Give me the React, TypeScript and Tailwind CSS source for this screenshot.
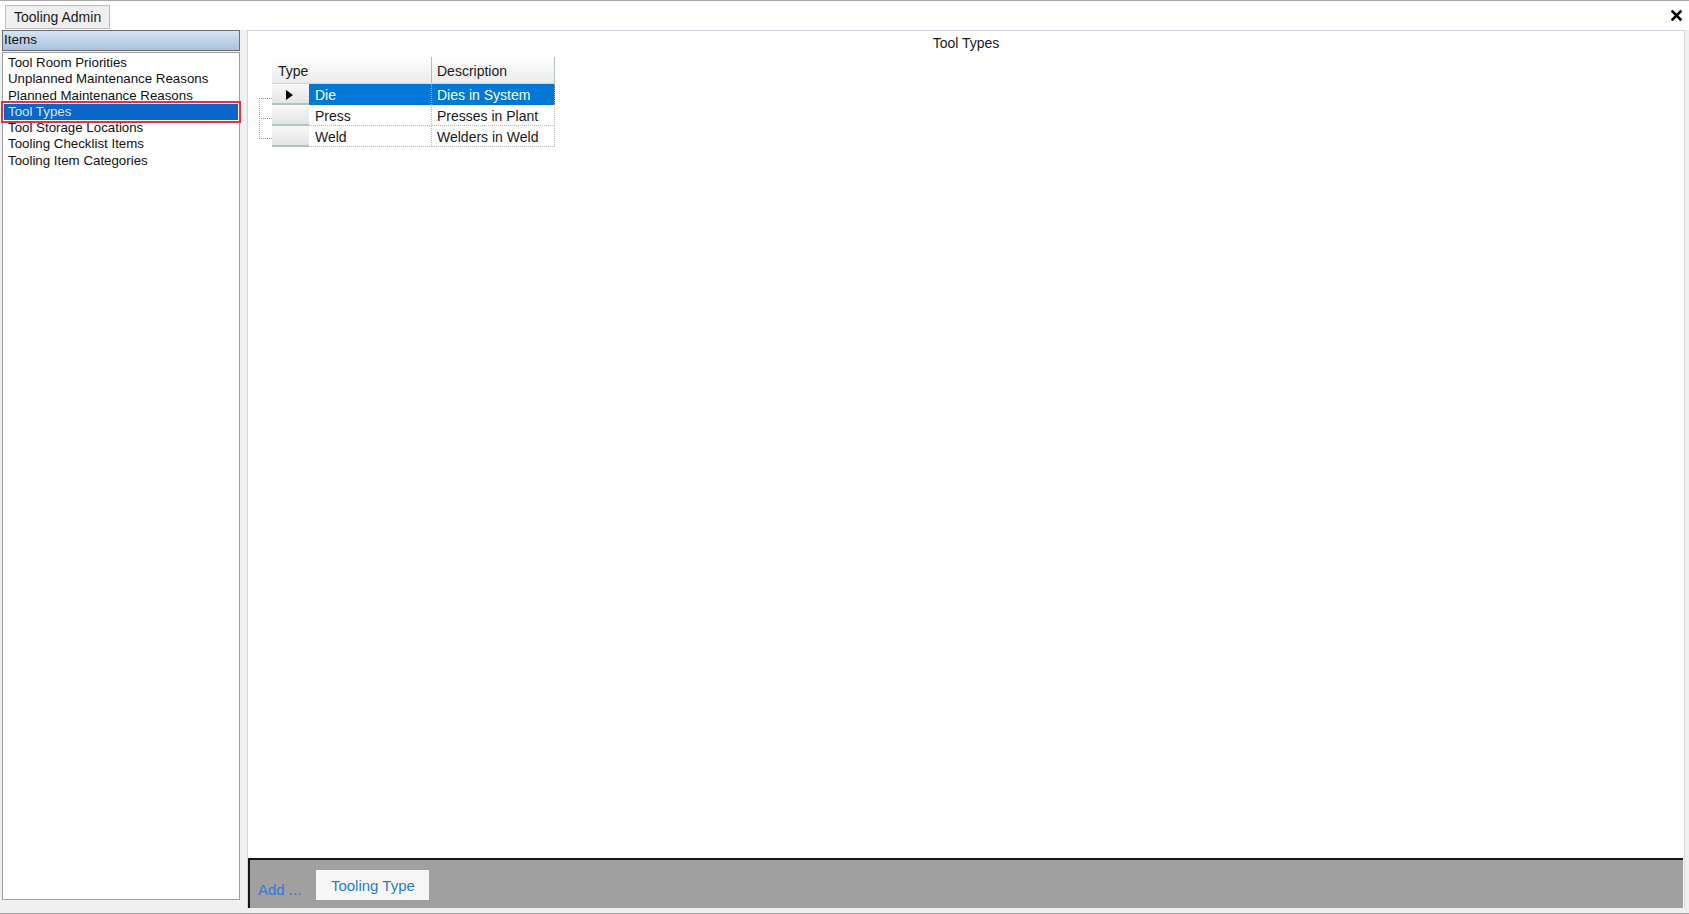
import React from "react";

const items = [
  "Tool Room Priorities",
  "Unplanned Maintenance Reasons",
  "Planned Maintenance Reasons",
  "Tool Types",
  "Tool Storage Locations",
  "Tooling Checklist Items",
  "Tooling Item Categories",
];

const rows = [
  { type: "Die", desc: "Dies in System" },
  { type: "Press", desc: "Presses in Plant" },
  { type: "Weld", desc: "Welders in Weld" },
];

export default function App() {
  return (
    <div className="w-[1689px] h-[914px] overflow-hidden bg-[#f0f0f0] border-t border-b border-[#a8a8a8] flex flex-col font-['Liberation_Sans',Arial,sans-serif] text-black">
      {/* tab strip */}
      <div className="h-[29px] bg-white flex items-start">
        <div className="ml-[5px] mt-[4px] h-[24px] px-[8px] bg-[#efefef] border border-[#bdbdbd] text-[14px] leading-[22px] text-[#1a1a1a]">
          Tooling Admin
        </div>
        <div className="flex-1" />
        <svg width="11" height="11" viewBox="0 0 11 11" className="mt-[9px] mr-[7px]">
          <path d="M1.5 1.5 L9.5 9.5 M9.5 1.5 L1.5 9.5" stroke="#000" strokeWidth="2.6" strokeLinecap="square" />
        </svg>
      </div>

      <div className="flex-1 flex items-start">
        {/* left panel */}
        <div className="ml-[2px] w-[238px] h-[870px] flex flex-col">
          <div className="h-[21px] border border-[#6e6e6e] bg-gradient-to-b from-[#d6e3f2] to-[#a9c1df] text-[13.5px] leading-[17px] pl-[1px] text-[#111]">
            Items
          </div>
          <div className="mt-[1px] flex-1 bg-white border border-[#a0a0a0] pt-[2px]">
            {items.map((it) =>
              it === "Tool Types" ? (
                <div key={it} className="relative mx-[1px] h-[16.3px] bg-[#0a66c9] outline-2 outline-[#e5323c] outline-offset-[1px] text-[13.3px] leading-[16px] pl-[4px] text-[#d9e6f7]">
                  {it}
                </div>
              ) : (
                <div key={it} className="h-[16.3px] text-[13.3px] leading-[16px] pl-[5px] text-[#111]">
                  {it}
                </div>
              )
            )}
          </div>
        </div>

        {/* right panel */}
        <div className="ml-[7px] w-[1438px] h-[878px] bg-white border border-b-0 border-[#d0d9e3] flex flex-col">
          <div className="h-[20px] pt-[4px] text-center text-[14px] leading-[16px] text-[#1a1a1a]">Tool Types</div>

          <div className="mt-[6px] ml-[11px] flex flex-col">
            {/* header */}
            <div className="ml-[13px] flex h-[27px] text-[14px] text-[#1a1a1a]">
              <div className="w-[160px] h-full flex items-center pt-[2px] pl-[6px] bg-gradient-to-b from-white to-[#ebebeb] border-r border-[#aebfbf] border-b border-b-[#d6d6d6]">
                Type
              </div>
              <div className="w-[123px] h-full flex items-center pt-[2px] pl-[5px] bg-gradient-to-b from-white to-[#ebebeb] border-r border-[#aebfbf] border-b border-b-[#d6d6d6]">
                Description
              </div>
            </div>

            <div className="flex">
              <svg width="13" height="63" viewBox="0 0 13 63" className="shrink-0">
                <g stroke="#9a9a9a" strokeWidth="1" strokeDasharray="1 1" fill="none">
                  <path d="M0.5 14 V54" />
                  <path d="M0 14.5 H13" />
                  <path d="M0 34.5 H13" />
                  <path d="M0 54.5 H13" />
                </g>
              </svg>
              <div className="flex flex-col">
                {rows.map((r, i) => {
                  const sel = i === 0;
                  return (
                    <div key={r.type} className="flex h-[21px] text-[14px]">
                      <div className="w-[37px] h-full flex items-center justify-center bg-gradient-to-b from-[#f9f9f9] to-[#e4e4e4] border-b-2 border-[#b0c2c2]">
                        {sel && (
                          <svg width="7" height="10" viewBox="0 0 7 10" className="ml-[-2px] mt-[3px]">
                            <path d="M0 0 L7 5 L0 10 Z" fill="#000" />
                          </svg>
                        )}
                      </div>
                      <div
                        className={
                          sel
                            ? "w-[123px] h-full flex items-center pt-[2px] pl-[6px] bg-[#0078d7] text-white border-r border-dotted border-[#7fb4e6]"
                            : "w-[123px] h-full flex items-center pt-[2px] pl-[6px] text-[#1a1a1a] border-r border-b border-dotted border-[#b8b8b8]"
                        }
                      >
                        {r.type}
                      </div>
                      <div
                        className={
                          sel
                            ? "w-[123px] h-full flex items-center pt-[2px] pl-[5px] bg-[#0078d7] text-white border-r border-dotted border-[#b8b8b8]"
                            : "w-[123px] h-full flex items-center pt-[2px] pl-[5px] text-[#1a1a1a] border-r border-b border-dotted border-[#b8b8b8]"
                        }
                      >
                        {r.desc}
                      </div>
                    </div>
                  );
                })}
              </div>
            </div>
          </div>

          <div className="flex-1" />

          {/* bottom bar */}
          <div className="ml-0 mr-[1px] h-[50px] bg-[#a0a0a0] border-t-2 border-l-2 border-[#161616] flex items-center">
            <span className="ml-[8px] mt-[12px] text-[15px] text-[#2a7de1]">Add ...</span>
            <div className="ml-[15px] mt-[2px] h-[30px] w-[113px] pt-[3px] bg-[#f7f7f7] flex items-center justify-center text-[15px] text-[#2a7bd8]">
              Tooling Type
            </div>
          </div>
        </div>
      </div>
    </div>
  );
}
